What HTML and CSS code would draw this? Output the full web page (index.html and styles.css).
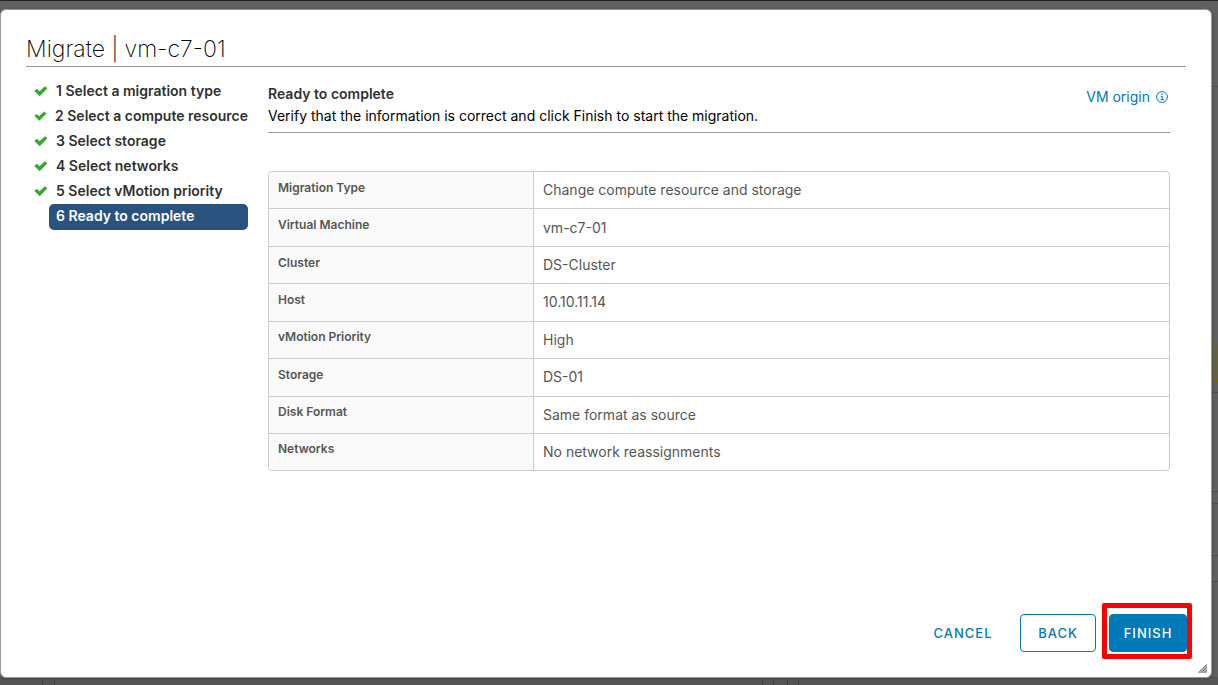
FILE: index.html
```html
<!DOCTYPE html>
<html lang="en">
<head>
<meta charset="utf-8">
<title>Migrate | vm-c7-01</title>
<meta name="viewport" content="width=device-width, initial-scale=1">
<link rel="stylesheet" href="styles.css">
</head>
<body>
<svg class="defs" width="0" height="0" aria-hidden="true">
  <symbol id="check" viewBox="0 0 14 12">
    <path d="M0.4 6 2.8 3.8 5.5 6.2 11 1.2 13.4 3.3 5.7 11.2Z" fill="#35a92b"/>
  </symbol>
</svg>
<div class="backdrop" aria-hidden="true">
  <div class="edge">
    <span class="line line-a"></span>
    <span class="alert"></span>
    <span class="line line-b"></span>
    <span class="line line-c"></span>
    <span class="line line-d"></span>
    <span class="line line-e"></span>
    <span class="line line-f"></span>
  </div>
  <div class="foot">
    <span class="tick tick-a"></span>
    <span class="tick tick-b"></span>
    <span class="tick tick-c"></span>
    <span class="tick tick-d"></span>
    <span class="tick tick-e"></span>
    <span class="tick tick-f"></span>
  </div>
</div>
<main class="dialog" role="dialog" aria-labelledby="title">
  <h1 class="title" id="title">Migrate | vm-c7-01</h1>
  <div class="content">
    <nav aria-label="Steps">
      <ol class="steps">
        <li class="step"><svg class="check" aria-hidden="true"><use href="#check"/></svg><span class="label">1 Select a migration type</span></li>
        <li class="step"><svg class="check" aria-hidden="true"><use href="#check"/></svg><span class="label">2 Select a compute resource</span></li>
        <li class="step"><svg class="check" aria-hidden="true"><use href="#check"/></svg><span class="label">3 Select storage</span></li>
        <li class="step"><svg class="check" aria-hidden="true"><use href="#check"/></svg><span class="label">4 Select networks</span></li>
        <li class="step"><svg class="check" aria-hidden="true"><use href="#check"/></svg><span class="label">5 Select vMotion priority</span></li>
        <li class="step current" aria-current="step"><span class="label">6 Ready to complete</span></li>
      </ol>
    </nav>
    <section class="page">
      <header class="page-head">
        <div>
          <h2 class="heading">Ready to complete</h2>
          <p class="hint">Verify that the information is correct and click Finish to start the migration.</p>
        </div>
        <a class="origin" href="#">VM origin
          <svg class="info" viewBox="0 0 12 12" aria-hidden="true">
            <circle cx="6" cy="6" r="5.4" fill="none" stroke="currentColor"/>
            <path d="M4.8 5.3H6.3V8.6M4.5 8.7H8" fill="none" stroke="currentColor"/>
            <circle cx="6" cy="3.3" r="0.8" fill="currentColor"/>
          </svg>
        </a>
      </header>
      <table class="summary">
        <tbody>
          <tr><th scope="row">Migration Type</th><td>Change compute resource and storage</td></tr>
          <tr><th scope="row">Virtual Machine</th><td>vm-c7-01</td></tr>
          <tr><th scope="row">Cluster</th><td>DS-Cluster</td></tr>
          <tr><th scope="row">Host</th><td>10.10.11.14</td></tr>
          <tr><th scope="row">vMotion Priority</th><td>High</td></tr>
          <tr><th scope="row">Storage</th><td>DS-01</td></tr>
          <tr><th scope="row">Disk Format</th><td>Same format as source</td></tr>
          <tr><th scope="row">Networks</th><td>No network reassignments</td></tr>
        </tbody>
      </table>
    </section>
  </div>
  <footer class="actions">
    <button class="btn link" type="button">CANCEL</button>
    <button class="btn outline" type="button">BACK</button>
    <span class="mark"><button class="btn primary" type="button">FINISH</button></span>
  </footer>
  <svg class="grip" viewBox="0 0 9 9" aria-hidden="true">
    <path d="M0 9 9 0V9Z" fill="#b5b5b5"/>
    <path d="M0.5 8.5 8.5 0.5M3.5 8.5 8.5 3.5M6.5 8.5 8.5 6.5" stroke="#777" fill="none"/>
  </svg>
</main>
</body>
</html>
```

FILE: styles.css
```css
* {
  box-sizing: border-box;
}

body {
  margin: 0;
  min-height: 100vh;
  display: flex;
  padding: 9px 6px 7px 0;
  background: #606060;
  color: #000;
  font-family: Inter, "Liberation Sans", sans-serif;
  font-size: 14px;
  line-height: 20px;
}

.defs {
  position: absolute;
}

.backdrop {
  position: absolute;
  inset: 0;
  overflow: hidden;
  border-top: 1px solid #1c232b;
}

.edge {
  position: absolute;
  top: 0;
  right: 0;
  bottom: 0;
  width: 7px;
}

.line {
  position: absolute;
  left: 0;
  right: 0;
  height: 1px;
  background: #4c4c4c;
}

.line-a { top: 85px; }
.line-b { top: 391px; }
.line-c { top: 490px; }
.line-d { top: 502px; }
.line-e { top: 554px; }
.line-f { top: 580px; }

.alert {
  position: absolute;
  top: 342px;
  left: 0;
  right: 0;
  height: 38px;
  border: solid #796300;
  border-width: 1px 0;
  background: #636045;
}

.foot {
  position: absolute;
  left: 0;
  right: 0;
  bottom: 0;
  height: 8px;
  background: #555;
}

.tick {
  position: absolute;
  top: 0;
  bottom: 0;
  width: 1px;
  background: #3e3e3e;
}

.tick-a { left: 42px; }
.tick-b { left: 54px; }
.tick-c { left: 762px; }
.tick-d { left: 773px; }
.tick-e { left: 787px; }
.tick-f { left: 798px; }

.dialog {
  position: relative;
  flex: 1;
  display: flex;
  flex-direction: column;
  padding: 24px 25px 18px;
  border: 1px solid #999;
  border-radius: 6px;
  background: #fff;
  box-shadow: 0 1px 3px #444;
}

.title {
  margin: 0;
  padding-bottom: 2px;
  border-bottom: 1px solid #999;
  font-size: 23px;
  font-weight: 200;
  line-height: 30px;
}

.content {
  flex: 1;
  display: flex;
  gap: 20px;
  padding: 11px 16px 0 8px;
}

.steps {
  width: 214px;
  margin: 0;
  padding: 0;
  list-style: none;
}

.step {
  display: flex;
  align-items: center;
  gap: 8px;
  height: 25px;
  color: #313131;
  font-weight: 600;
  white-space: nowrap;
}

.check {
  width: 14px;
  height: 12px;
}

.current {
  height: 26px;
  margin: 1px 0 0 15px;
  padding: 0 7px 2px;
  border-radius: 5px;
  background: #29527f;
  color: #fff;
}

.page {
  flex: 1;
}

.page-head {
  display: flex;
  justify-content: space-between;
  padding: 5px 2px 5px 0;
  border-bottom: 1px solid #999;
}

.heading {
  margin: 0;
  color: #313131;
  font-size: 14px;
  font-weight: 600;
  line-height: 22px;
}

.hint {
  margin: 0;
  line-height: 22px;
}

.origin {
  display: flex;
  align-items: center;
  gap: 6px;
  height: 27px;
  color: #0079b8;
  text-decoration: none;
}

.info {
  width: 12px;
  height: 12px;
}

.summary {
  width: 100%;
  height: 300px;
  margin-top: 38px;
  border: 1px solid #ccc;
  border-radius: 4px;
  border-collapse: separate;
  border-spacing: 0;
  overflow: hidden;
  color: #565656;
}

.summary th,
.summary td {
  padding: 0 9px;
  border-bottom: 1px solid #ccc;
  text-align: left;
}

.summary th {
  width: 265px;
  padding-bottom: 5px;
  border-right: 1px solid #ccc;
  background: #fafafa;
  font-size: 12px;
  font-weight: 600;
}

.summary tr:last-child > * {
  border-bottom: 0;
}

.actions {
  display: flex;
  justify-content: flex-end;
  align-items: baseline;
  margin-right: -6px;
}

.btn {
  height: 38px;
  border: 1px solid #0079b8;
  border-radius: 4px;
  background: #fff;
  color: #0079b8;
  font: 500 13px/20px Inter, "Liberation Sans", sans-serif;
  letter-spacing: 1px;
  cursor: pointer;
}

.link {
  width: 84px;
  margin-right: 15px;
  border-color: transparent;
}

.outline {
  width: 76px;
  margin-right: 6px;
}

.primary {
  width: 78px;
  background: #0079b8;
  color: #fff;
}

.mark {
  display: flex;
  padding: 6px 0 2px 2px;
  border: 5px solid #f00;
  border-radius: 2px;
}

.grip {
  position: absolute;
  right: 4px;
  bottom: 4px;
  width: 9px;
  height: 9px;
}
```
